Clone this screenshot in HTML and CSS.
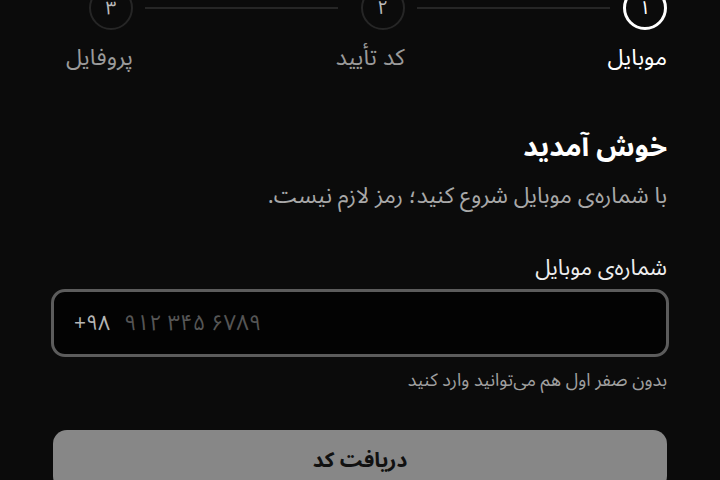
FILE: index.html
```html
<!DOCTYPE html>
<html lang="fa" dir="rtl">
<head>
  <meta charset="UTF-8">
  <title>ورود</title>
  <link rel="stylesheet" href="styles.css">
</head>
<body>

<div class="page">
  <div class="stepper">
    <div class="step active">
      <div class="circle">۱</div>
      <div class="step-label">موبایل</div>
    </div>
    <div class="line"></div>
    <div class="step">
      <div class="circle">۲</div>
      <div class="step-label">کد تأیید</div>
    </div>
    <div class="line"></div>
    <div class="step">
      <div class="circle">۳</div>
      <div class="step-label">پروفایل</div>
    </div>
  </div>

  <h1>خوش آمدید</h1>
  <p class="subtitle">با شماره‌ی موبایل شروع کنید؛ رمز لازم نیست.</p>

  <label class="field-label" for="phone">شماره‌ی موبایل</label>
  <div class="phone-box">
    <span class="prefix">+۹۸</span>
    <input id="phone" type="tel" placeholder="۹۱۲ ۳۴۵ ۶۷۸۹">
  </div>
  <div class="hint">بدون صفر اول هم می‌توانید وارد کنید</div>

  <button class="submit">دریافت کد</button>
</div>

</body>
</html>
```

FILE: styles.css
```css
body {
  margin: 0;
  background: #0b0b0b;
  color: #fff;
  font-family: "Noto Sans Arabic", "DejaVu Sans", sans-serif;
  overflow: hidden;
}

.page {
  padding: 0 51px;
}

.stepper {
  display: flex;
  align-items: flex-start;
  margin-top: -14px;
  padding: 0 2px 0 15px;
}

.step {
  display: flex;
  flex-direction: column;
  align-items: flex-start;
}

.circle {
  width: 40px;
  height: 40px;
  border: 2px solid #262626;
  border-radius: 50%;
  display: flex;
  align-items: center;
  justify-content: center;
  color: #bbb;
  font-size: 19px;
  line-height: 1;
}

.step.active .circle {
  border: 3px solid #fff;
  width: 38px;
  height: 38px;
  color: #fff;
}

.step-label {
  margin-top: 12px;
  font-size: 23px;
  line-height: 32px;
  color: #9a9a9a;
  white-space: nowrap;
}

.step.active .step-label {
  color: #fff;
}

.line {
  flex: 1;
  height: 2px;
  background: #262626;
  margin: 21px -2px 0 12px;
}

h1,
.subtitle,
.field-label,
.hint {
  padding-right: 2px;
}

h1 {
  margin: 54px 0 0;
  font-size: 28px;
  line-height: 40px;
  font-weight: bold;
}

.subtitle {
  margin: 11px 0 0;
  font-size: 22.5px;
  line-height: 34px;
  color: #a8a8a8;
}

.field-label {
  display: block;
  margin-top: 38px;
  font-size: 22px;
  line-height: 34px;
  color: #eee;
}

.phone-box {
  direction: ltr;
  display: flex;
  align-items: center;
  gap: 12px;
  height: 62px;
  margin-top: 4px;
  padding: 0 20px;
  border: 3px solid #5c5c5c;
  border-radius: 14px;
  background: #030303;
}

.prefix {
  font-size: 21px;
  color: #b5b5b5;
}

.phone-box input {
  flex: 1;
  background: none;
  border: none;
  outline: none;
  color: #fff;
  font-family: inherit;
  font-size: 22px;
  direction: ltr;
}

.phone-box input::placeholder {
  color: #555;
}

.hint {
  margin-top: 9px;
  font-size: 18px;
  line-height: 28px;
  color: #a0a0a0;
}

.submit {
  display: block;
  width: calc(100% - 4px);
  margin: 36px 2px 0;
  height: 60px;
  border: none;
  border-radius: 14px;
  background: #878787;
  color: #111;
  font-family: inherit;
  font-size: 21px;
  font-weight: bold;
}
```
